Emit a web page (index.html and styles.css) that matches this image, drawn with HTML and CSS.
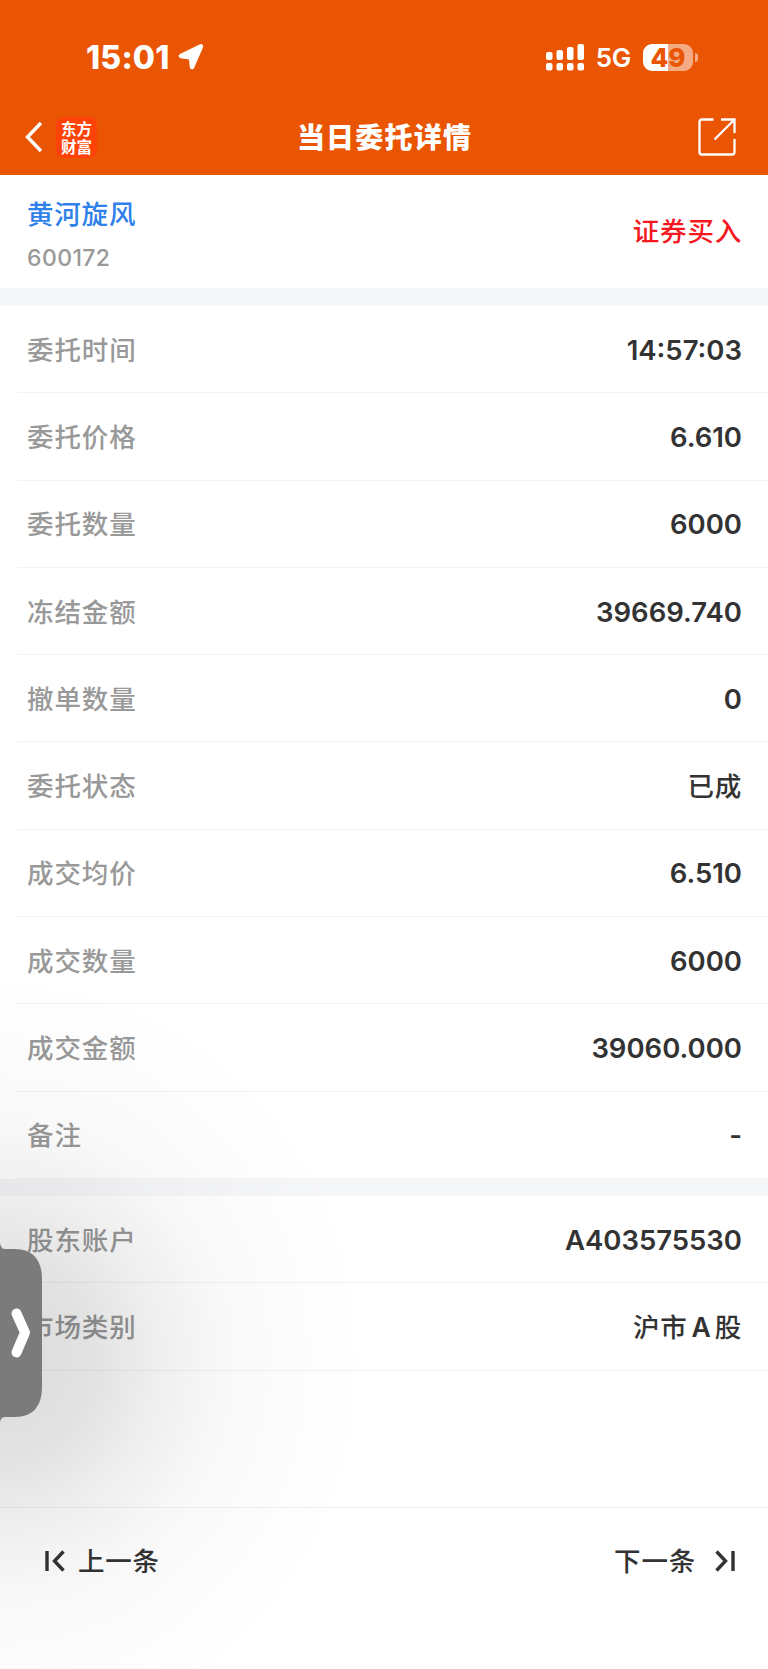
FILE: index.html
```html
<!DOCTYPE html>
<html lang="zh-CN">
<head>
  <meta charset="UTF-8">
  <meta name="viewport" content="width=device-width, initial-scale=1.0">
  <title>当日委托详情</title>
  <link rel="stylesheet" href="styles.css">
</head>
<body>
  <header class="header">
    <div class="status-bar">
      <div class="status-left">
        <span class="clock">15:01</span>
        <svg class="location" width="28" height="28" viewBox="0 0 28 28">
          <path d="M24 3.3 L4 13 L14 14.5 L15 24 Z" fill="#fff" stroke="#fff" stroke-width="4.5" stroke-linejoin="round"/>
        </svg>
      </div>
      <div class="status-right">
        <svg width="38" height="27" viewBox="0 0 38 27" fill="#fff">
          <rect x="0" y="8" width="6.5" height="8" rx="2"/>
          <rect x="10.5" y="6" width="6.5" height="10" rx="2"/>
          <rect x="21" y="3" width="6.5" height="13" rx="2"/>
          <rect x="31.5" y="0" width="6.5" height="16" rx="2"/>
          <rect x="0" y="19" width="6.5" height="7.5" rx="2"/>
          <rect x="10.5" y="19" width="6.5" height="7.5" rx="2"/>
          <rect x="21" y="19" width="6.5" height="7.5" rx="2"/>
          <rect x="31.5" y="19" width="6.5" height="7.5" rx="2"/>
        </svg>
        <span class="network">5G</span>
        <span class="battery">49</span>
        <span class="battery-tip"></span>
      </div>
    </div>
    <nav class="nav-bar">
      <div class="nav-left">
        <svg width="18" height="32" viewBox="0 0 18 32">
          <path d="M16 2 L2.5 16 L16 30" fill="none" stroke="#fff" stroke-width="3.4"/>
        </svg>
        <div class="logo">
          <span>东方</span>
          <span>财富</span>
        </div>
      </div>
      <h1>当日委托详情</h1>
      <div class="nav-right">
        <svg width="38" height="38" viewBox="0 0 38 38" fill="none" stroke="#fff" stroke-width="2.3">
          <path d="M15.5 1.5 H4 Q1.5 1.5 1.5 4 V34 Q1.5 36.5 4 36.5 H34 Q36.5 36.5 36.5 34 V21"/>
          <path d="M23 1.5 H36.5 V15 M36 2 L16.5 21.5"/>
        </svg>
      </div>
    </nav>
  </header>

  <main>
    <section class="stock">
      <div>
        <div class="stock-name">黄河旋风</div>
        <div class="stock-code">600172</div>
      </div>
      <div class="direction">证券买入</div>
    </section>

    <section class="list">
      <div class="row"><span class="label">委托时间</span><span class="value">14:57:03</span></div>
      <div class="row"><span class="label">委托价格</span><span class="value">6.610</span></div>
      <div class="row"><span class="label">委托数量</span><span class="value">6000</span></div>
      <div class="row"><span class="label">冻结金额</span><span class="value">39669.740</span></div>
      <div class="row"><span class="label">撤单数量</span><span class="value">0</span></div>
      <div class="row"><span class="label">委托状态</span><span class="value cjk">已成</span></div>
      <div class="row"><span class="label">成交均价</span><span class="value">6.510</span></div>
      <div class="row"><span class="label">成交数量</span><span class="value">6000</span></div>
      <div class="row"><span class="label">成交金额</span><span class="value">39060.000</span></div>
      <div class="row"><span class="label">备注</span><span class="value">-</span></div>
    </section>

    <section class="list account">
      <div class="row"><span class="label">股东账户</span><span class="value">A403575530</span></div>
      <div class="row"><span class="label">市场类别</span><span class="value cjk">沪市<span class="latin">A</span>股</span></div>
    </section>
  </main>

  <footer class="pager">
    <div class="pager-item">
      <svg width="20" height="22" viewBox="0 0 20 22" fill="none" stroke="#333" stroke-width="3.4">
        <path d="M2 1 V21 M18.5 1.5 L9.5 11 L18.5 20.5"/>
      </svg>
      <span>上一条</span>
    </div>
    <div class="pager-item next">
      <span>下一条</span>
      <svg width="20" height="22" viewBox="0 0 20 22" fill="none" stroke="#333" stroke-width="3.4">
        <path d="M18 1 V21 M1.5 1.5 L10.5 11 L1.5 20.5"/>
      </svg>
    </div>
  </footer>

  <!-- side drawer handle -->
  <div class="drawer-shadow"></div>
  <svg class="drawer-handle" width="43" height="182" viewBox="0 0 43 182">
    <path d="M0 0 Q1 6 5 6 H15 C33 6 42 17 42 36 V144 C42 163 33 174 15 174 H5 Q1 174 0 179 Z" fill="#7b7b7b"/>
    <path d="M16.5 70.5 L25 89.5 L16.5 109.5" fill="none" stroke="#fff" stroke-width="10" stroke-linecap="round" stroke-linejoin="round"/>
  </svg>
</body>
</html>
```

FILE: styles.css
```css
* {
  margin: 0;
  padding: 0;
  box-sizing: border-box;
}

body {
  position: relative;
  display: flex;
  flex-direction: column;
  height: 1669px;
  background-color: #fff;
  color: #333;
  font-family: Inter, "Noto Sans CJK SC", sans-serif;
  font-weight: 500;
  overflow: hidden;
}

svg {
  display: block;
  flex-shrink: 0;
}

/* Header */
.header {
  height: 175px;
  background-color: #ea5504;
  color: #fff;
}

.status-bar {
  display: flex;
  justify-content: space-between;
  align-items: center;
  height: 99px;
  padding: 15px 70px 0 86px;
}

.status-left,
.status-right {
  display: flex;
  align-items: center;
}

.clock {
  padding-top: 2px;
  font-size: 32px;
  font-weight: 800;
  line-height: 40px;
  letter-spacing: 0.2px;
}

.location {
  margin-left: 7px;
}

.network {
  margin-left: 12px;
  font-size: 26px;
  font-weight: 600;
  letter-spacing: -0.3px;
}

.battery {
  width: 50px;
  height: 27px;
  margin-left: 12px;
  border-radius: 9px;
  background: linear-gradient(to right, #fff 49%, #f4ab84 49%);
  color: #ea5504;
  font-size: 26px;
  font-weight: 800;
  line-height: 27px;
  text-align: center;
}

.battery-tip {
  width: 3px;
  height: 9px;
  margin-left: 2px;
  border-radius: 0 4px 4px 0;
  background-color: #f4ab84;
}

.nav-bar {
  display: grid;
  grid-template-columns: 1fr auto 1fr;
  align-items: center;
  height: 76px;
  padding: 0 32px 0 25px;
}

.nav-left {
  display: flex;
  align-items: center;
  gap: 13px;
}

.logo {
  display: flex;
  flex-direction: column;
  align-items: center;
  justify-content: center;
  width: 41px;
  height: 41px;
  padding-bottom: 1px;
  border-radius: 8px;
  background-color: #ff4207;
  font-family: "Noto Sans CJK SC", sans-serif;
  font-size: 15.5px;
  font-weight: 700;
}

.logo span {
  height: 18px;
  line-height: 18px;
}

.nav-bar h1 {
  padding: 2px 0 0 8px;
  font-size: 28px;
  font-weight: 800;
  line-height: 40px;
  letter-spacing: 1.2px;
}

.nav-right {
  display: flex;
  justify-content: flex-end;
}

/* Stock info */
.stock {
  display: flex;
  justify-content: space-between;
  height: 113px;
  padding: 19px 26px 0 27px;
  font-size: 26.5px;
  letter-spacing: 0.8px;
}

.stock-name {
  line-height: 40px;
  color: #2f80e8;
}

.stock-code {
  margin-top: 8px;
  font-size: 23px;
  line-height: 32px;
  letter-spacing: 0.4px;
  color: #999;
}

.direction {
  line-height: 75px;
  color: #f5191f;
}

/* Detail list */
.list {
  border-top: 18px solid #f6f7f9;
}

.account {
  border-top-width: 17px;
}

.row {
  display: flex;
  justify-content: space-between;
  align-items: center;
  height: 87.3px;
  margin-left: 17px;
  padding: 0 26px 0 10px;
  border-bottom: 1px solid #f2f2f2;
}

.label {
  padding-bottom: 2px;
  font-size: 26.5px;
  letter-spacing: 0.9px;
  color: #999;
}

.value {
  padding-top: 1px;
  font-size: 27.5px;
  font-weight: 600;
}

.cjk {
  padding: 0 0 2px;
  font-size: 26.5px;
  font-weight: 500;
  letter-spacing: 0.8px;
}

.latin {
  margin: 0 3px 0 4px;
  font-weight: 600;
}

/* Pager */
.pager {
  display: flex;
  justify-content: space-between;
  height: 162px;
  margin-top: auto;
  padding: 33px 33px 0 45px;
  border-top: 1px solid #f0f0f0;
}

.pager-item {
  display: flex;
  align-items: center;
  gap: 13px;
  height: 40px;
  font-size: 26.5px;
  letter-spacing: 0.8px;
}

.pager-item span {
  padding-bottom: 3px;
}

.next {
  gap: 19px;
}

/* Drawer */
.drawer-shadow {
  position: absolute;
  left: 0;
  top: 960px;
  width: 380px;
  height: 709px;
  background: radial-gradient(ellipse 370px 390px at 0 400px, rgba(0, 0, 0, 0.14), rgba(0, 0, 0, 0.115) 25%, rgba(0, 0, 0, 0.065) 42%, rgba(0, 0, 0, 0.028) 60%, rgba(0, 0, 0, 0.01) 80%, transparent);
}

.drawer-handle {
  position: absolute;
  left: 0;
  top: 1243px;
}
```
